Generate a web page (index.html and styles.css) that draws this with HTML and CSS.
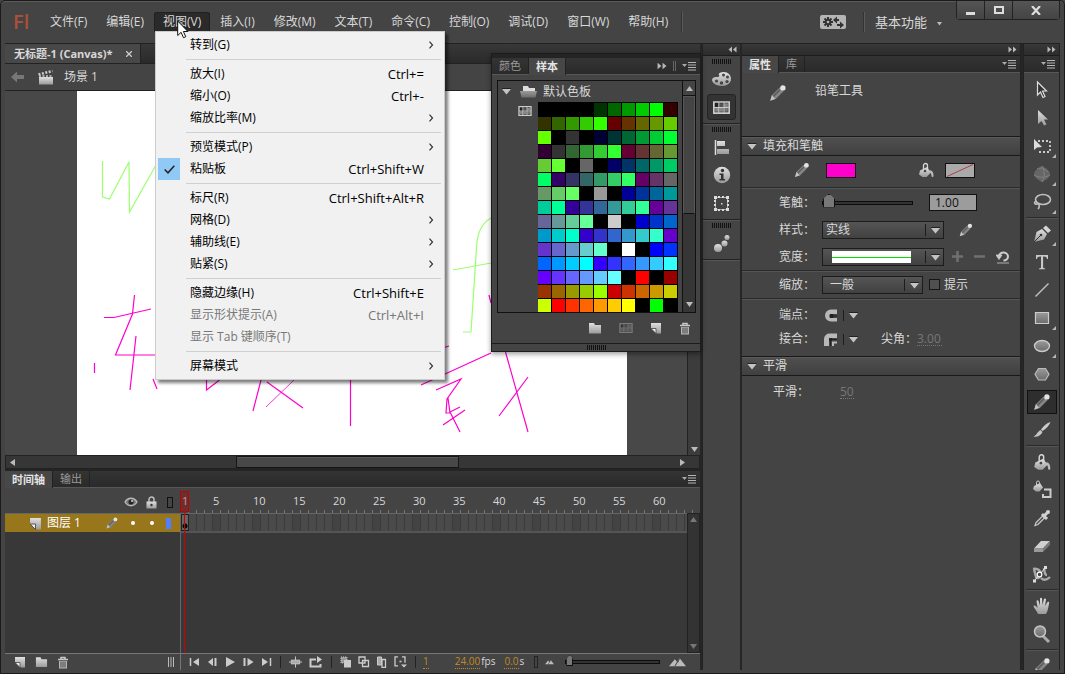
FILE: index.html
```html
<!DOCTYPE html>
<html lang="zh-CN">
<head>
<meta charset="utf-8">
<title>无标题-1 (Canvas)</title>
<link rel="stylesheet" href="styles.css">
</head>
<body>
<svg class="sprite" aria-hidden="true">
  <defs>
    <linearGradient id="metal" x1="0" y1="0" x2="0" y2="1"><stop offset="0" stop-color="#e0e0e0"/><stop offset="1" stop-color="#9a9a9a"/></linearGradient>
    <linearGradient id="dim" x1="0" y1="0" x2="0" y2="1"><stop offset="0" stop-color="#9a9a9a"/><stop offset="1" stop-color="#6c6c6c"/></linearGradient>
  </defs>
  <symbol id="pencil" viewBox="0 0 18 18"><path d="M2 16l1.500-5 7-7 3.500 3.500-7 7z" fill="#858585"/><path d="M2 16l1.500-5 1.200 1 .6 1.200 1.500 1z" fill="#c4c4c4"/><path d="M4.800 12l6-6" stroke="#5e5e5e" stroke-width="1.500"/><circle cx="13.400" cy="4.400" r="2.400" fill="#e4e4e4"/></symbol>
  <symbol id="bucket" viewBox="0 0 18 18"><path d="M3 9.500l7-3.500 4 5.500-4.500 4.500H5.500L2 13.500z" fill="url(#metal)"/><path d="M6.500 10V4.500a2 2 0 0 1 4 0V10" fill="none" stroke="#d6d6d6" stroke-width="1.300"/><path d="M13 9c3 1 3.500 3 3.500 6a1 1 0 0 1-2 0c0-2-.5-3-2-4z" fill="#bbb"/><circle cx="8" cy="10" r="1.300" fill="#444"/></symbol>
  <symbol id="menu-lines" viewBox="0 0 14 9"><path d="M0 2h5L2.500 5z" fill="#aaa"/><path d="M6 .5h8M6 3h8M6 5.500h8M6 8h8" stroke="#b5b5b5"/></symbol>
  <symbol id="dbl" viewBox="0 0 9 7"><path d="M.5 .5l3.500 3-3.500 3zM5 .5l3.500 3-3.500 3z" fill="#b8b8b8"/></symbol>
  <symbol id="dbl-left" viewBox="0 0 9 7"><path d="M4 .5L.5 3.500 4 6.500zM8.500 .5L5 3.500l3.500 3z" fill="#b8b8b8"/></symbol>
  <symbol id="down" viewBox="0 0 9 7"><path d="M0 .5h9" stroke="#222" stroke-width="1"/><path d="M0 1h9L4.500 6.500z" fill="#c4c4c4"/></symbol>
  <symbol id="chev" viewBox="0 0 6 8"><path d="M1.500 .7L4.500 4 1.500 7.300" fill="none" stroke="#333" stroke-width="1.200"/></symbol>
  <symbol id="folder" viewBox="0 0 14 12"><path d="M1 1h5l1 2h6v8.500H1z" fill="url(#metal)"/></symbol>
  <symbol id="newpage" viewBox="0 0 12 12"><path d="M1 1h10v10.500H6.500L1 6z" fill="url(#metal)"/><path d="M1 6.500h5v5z" fill="#eee" stroke="#444" stroke-width=".8"/></symbol>
  <symbol id="trash" viewBox="0 0 12 13"><path d="M1 3.500h10M4 3V1.500h4V3" fill="none" stroke="#c8c8c8" stroke-width="1.500"/><path d="M2 5h8v7.500H2z" fill="#b5b5b5"/><path d="M4 5.500v6M6 5.500v6M8 5.500v6" stroke="#444"/></symbol>
  <symbol id="swgrid" viewBox="0 0 16 12"><path d="M.8 .8h14.400v10.400H.8z" fill="#222" stroke="#ccc" stroke-width="1.600"/><path d="M6 2h3.500v3.500H6z" fill="#555"/><path d="M10.500 2h3.500v3.500h-3.500zM2 6.500h3.500V10H2zM6 6.500h3.500V10H6z" fill="#888"/><path d="M10.500 6.500h3.500V10h-3.500z" fill="#777"/><path d="M5.500 1v10M10.300 1v10M1 6h14" stroke="#ccc"/></symbol>
  <symbol id="palette" viewBox="0 0 22 18"><path d="M13 2c4 0 7 3 7 7s-4 7-9 7S1 13 1 10c0-2 2-3 4-3s4 0 3-2 2-3 5-3z" fill="url(#metal)"/><g fill="#444"><circle cx="12.500" cy="5" r="1.500"/><circle cx="16.500" cy="7" r="1.500"/><circle cx="16" cy="11.500" r="1.600"/><circle cx="10.500" cy="13" r="1.700"/><circle cx="5.500" cy="11" r="1.600"/></g></symbol>
  <symbol id="align" viewBox="0 0 16 16"><path d="M1.500 1v15" stroke="#ddd" stroke-width="1.500"/><path d="M3 2h8v5H3zM3 10h12v5H3z" fill="url(#metal)"/></symbol>
  <symbol id="info" viewBox="0 0 18 18"><circle cx="9" cy="9" r="8.200" fill="url(#metal)"/><circle cx="9.500" cy="4.500" r="1.700" fill="#333"/><path d="M6.500 7.500h4V13H12v1.500H6.500V13H8V9H6.500z" fill="#333"/></symbol>
  <symbol id="xform" viewBox="0 0 17 17"><path d="M2.500 2.500h12v12h-12z" fill="none" stroke="#aaa"/><path d="M1 1h3v3H1zM5 1h2v2H5zM9 1h2v2H9zM13 1h3v3h-3zM1 5h2v2H1zM1 9h2v2H1zM14 5h2v2h-2zM14 9h2v2h-2zM1 13h3v3H1zM5 14h2v2H5zM9 14h2v2H9zM13 13h3v3h-3zM8 8h1.500v1.500H8z" fill="#ddd"/></symbol>
  <symbol id="balls" viewBox="0 0 18 18"><circle cx="5" cy="14" r="4" fill="url(#metal)"/><circle cx="11.500" cy="9.500" r="3" fill="url(#metal)"/><circle cx="14" cy="3.500" r="2.500" fill="url(#metal)"/></symbol>
  <symbol id="corner" viewBox="0 0 4 4"><path d="M4 0v4H0z" fill="#b5b5b5"/></symbol>
  <symbol id="t-select" viewBox="0 0 20 20"><path d="M5.500 2v13l3-3 2.500 5.500 2-1-2.500-5.500h4z" fill="#333" stroke="#ddd" stroke-width="1.200"/></symbol>
  <symbol id="t-sub" viewBox="0 0 20 20"><path d="M6 2v14l3.500-3 2.500 4.500 2.500-1-2.500-5h4z" fill="url(#metal)"/></symbol>
  <symbol id="t-free" viewBox="0 0 20 20"><path d="M6 5h12v11H5" fill="none" stroke="#ccc" stroke-width="1.800" stroke-dasharray="2 2"/><path d="M2 3v11l3-2.500 5-.5z" fill="#ddd"/></symbol>
  <symbol id="t-3d" viewBox="0 0 20 20"><path d="M10 2c4 2 8 5 8 8s-4 6-8 8c-4-2-8-5-8-8s4-6 8-8z" fill="#666"/><path d="M2 11c5 3 11 3 16 0M10 2c3 5 3 11 0 16M5 5c4-2 7-1 11 3" fill="none" stroke="#808080" stroke-width="1"/></symbol>
  <symbol id="t-lasso" viewBox="0 0 20 20"><ellipse cx="11" cy="7.500" rx="7.500" ry="5" fill="none" stroke="#c0c0c0" stroke-width="1.600"/><path d="M4.500 9c-3 1-2 4 .5 3s3 3 1 5" fill="none" stroke="#c0c0c0" stroke-width="1.600"/></symbol>
  <symbol id="t-pen" viewBox="0 0 20 20"><path d="M2 18L4.500 8 10 5l5 5-3 5.500z" fill="url(#metal)"/><path d="M11 4l3-2.500 5 5-3 2.500z" fill="#d5d5d5"/><path d="M2 18l6-6" stroke="#333"/><circle cx="9" cy="11" r="1.300" fill="#333"/></symbol>
  <symbol id="t-text" viewBox="0 0 20 20"><path d="M4 3h12v4h-1c-.3-2-1-2.600-3.500-2.600h-.4V15c0 1 .5 1.300 2 1.400v.8H7v-.8c1.500-.1 2-.4 2-1.400V4.400h-.5C6 4.400 5.300 5 5 7H4z" fill="#c8c8c8"/></symbol>
  <symbol id="t-line" viewBox="0 0 20 20"><path d="M3.500 16.500l13-13" stroke="#c0c0c0" stroke-width="1.500"/></symbol>
  <symbol id="t-rect" viewBox="0 0 20 20"><path d="M3.500 4.500h13v11h-13z" fill="url(#dim)" stroke="#ccc" stroke-width="1.200"/></symbol>
  <symbol id="t-oval" viewBox="0 0 20 20"><ellipse cx="10" cy="10" rx="7.500" ry="5.500" fill="url(#dim)" stroke="#ccc" stroke-width="1.300"/></symbol>
  <symbol id="t-poly" viewBox="0 0 20 20"><path d="M6.500 4.500h7l3.500 5.700-3.500 5.800h-7L3 10.200z" fill="url(#dim)" stroke="#bbb" stroke-width="1.200"/></symbol>
  <symbol id="t-brush" viewBox="0 0 20 20"><path d="M18.500 2c-1 3-4 6.500-8 9L9 9.500C11.500 6 15 3 18.500 2z" fill="#ccc"/><path d="M8.500 10l2 2C9 15.500 5 17.500 1.500 16.500 5 15 5 12 8.500 10z" fill="#c4c4c4"/></symbol>
  <symbol id="t-ink" viewBox="0 0 20 20"><path d="M2 6l6-3 3 4.500-3.500 4H4L1 9z" fill="url(#metal)"/><path d="M4.500 7V2.500a1.500 1.500 0 0 1 3 0V7" fill="none" stroke="#ccc"/><path d="M12 9.500h6.500v7.500H11V14" fill="none" stroke="#ccc" stroke-width="2"/></symbol>
  <symbol id="t-drop" viewBox="0 0 20 20"><path d="M3 17.500l1-3 6.500-6.500 2 2L6 16.500z" fill="#555" stroke="#c8c8c8" stroke-width="1.200"/><path d="M10 6l5 5M12 8l4-4" stroke="#d2d2d2" stroke-width="3"/><circle cx="16" cy="4" r="2" fill="#d2d2d2"/></symbol>
  <symbol id="t-eraser" viewBox="0 0 20 20"><path d="M9 5h9l-7 7.500H2z" fill="#d0d0d0"/><path d="M2 12.500h9V16H2z" fill="#999"/><path d="M11 12.500L18 5v4l-7 7z" fill="#777"/></symbol>
  <symbol id="t-width" viewBox="0 0 20 20"><path d="M1 5c5-1 7 1 8 5M2 6c2 4 1 7 3 8s3-2 4-3M12 4c1 4 0 7 3 7M9 14c3 3 6 2 9-1" fill="none" stroke="#a8a8a8" stroke-width="2.400"/><path d="M2 17L14 3" stroke="#eee"/><circle cx="7.500" cy="10.500" r="2.300" fill="#444" stroke="#fff" stroke-width="1.200"/><path d="M1 15.500h3v3H1zM12 2h3v3h-3z" fill="#ddd"/></symbol>
  <symbol id="t-hand" viewBox="0 0 20 20"><path d="M6 18C5 15 2 12 1.500 10c1-1 2.500 0 4 2L4.500 5c.5-1 1.700-1 2 0L8 9.500 8 2.500c.5-1 1.800-1 2 0l.5 6.500L12 3c.5-1 2-.6 2 .5L13 10l2.500-4c.8-.8 2-.2 1.700 1C16.500 10 16 15 14 18z" fill="url(#metal)"/></symbol>
  <symbol id="t-zoom" viewBox="0 0 20 20"><path d="M11 12l6 6" stroke="#aaa" stroke-width="3"/><circle cx="8" cy="7.500" r="5.500" fill="url(#dim)" stroke="#c5c5c5" stroke-width="1.500"/></symbol>
  <symbol id="eye" viewBox="0 0 14 10"><path d="M1 5c3-5 9-5 12 0-3 5-9 5-12 0z" fill="#777" stroke="#b8b8b8" stroke-width="1.400"/><circle cx="7" cy="5" r="2.500" fill="#222"/><circle cx="8" cy="4" r="1" fill="#ddd"/></symbol>
  <symbol id="lock" viewBox="0 0 11 13"><path d="M3 6V3.500a2.500 2.500 0 0 1 5 0V6" fill="none" stroke="#bbb" stroke-width="1.500"/><path d="M.5 5.500h10v7H.5z" fill="url(#metal)"/><circle cx="5.500" cy="9" r="1.200" fill="#333"/></symbol>
  <symbol id="prev" viewBox="0 0 11 10"><path d="M6 1v8L1 5z" fill="#ccc"/><path d="M8.500 1v8" stroke="#ccc" stroke-width="2"/></symbol>
  <symbol id="play" viewBox="0 0 11 10"><path d="M1 0v10l9-5z" fill="#ccc"/></symbol>
  <symbol id="centre" viewBox="0 0 14 12"><path d="M7 0v12M0 6h2M12 6h2" stroke="#ccc"/><path d="M2.500 4h9v4h-9z" fill="#aaa" stroke="#ccc"/></symbol>
  <symbol id="loop" viewBox="0 0 14 12"><path d="M7 3.500H1.500v7h10V8" fill="none" stroke="#ccc" stroke-width="2"/><path d="M8 0l5 3.500L8 7z" fill="#ccc"/></symbol>
  <symbol id="onion" viewBox="0 0 12 12"><path d="M1 1h6v6H1z" fill="#999" stroke="#ccc" stroke-dasharray="1 1"/><path d="M4 4h7v7.500H4z" fill="#ccc"/></symbol>
  <symbol id="outlines" viewBox="0 0 12 12"><path d="M1 1h6v6H1zM4.500 4.500h6v6h-6z" fill="#444" stroke="#ccc" stroke-width="1.300"/></symbol>
  <symbol id="multi" viewBox="0 0 12 12"><path d="M1.500 1h4v8h-4z" fill="#aaa" stroke="#ccc"/><path d="M6 3.500h3.500v8H6z" fill="#444" stroke="#ccc" stroke-width="1.300"/></symbol>
  <symbol id="brackets" viewBox="0 0 13 12"><path d="M4 .8H1v9h3M8 .8h3v6M5.500 5.500h2" fill="none" stroke="#ccc" stroke-width="1.300"/><path d="M7 8.500h6l-3 3z" fill="#ccc"/></symbol>
  <symbol id="hills" viewBox="0 0 16 9"><path d="M0 8.500L5.500 2l3 3.500L10 1l6 7.500z" fill="#bbb"/><path d="M5.500 8.500L10 1" stroke="#555"/></symbol>
</svg>

<div class="app">
  <header class="titlebar">
    <div class="logo">Fl</div>
    <nav class="menubar">
      <button>文件(F)</button><button>编辑(E)</button><button class="open">视图(V)</button><button>插入(I)</button><button>修改(M)</button><button>文本(T)</button><button>命令(C)</button><button>控制(O)</button><button>调试(D)</button><button>窗口(W)</button><button>帮助(H)</button>
    </nav>
    <span class="vline"></span>
    <span class="spacer"></span>
    <button class="sync" aria-label="同步设置"><svg width="26" height="14" viewBox="0 0 26 14"><g stroke="#333" stroke-width="2"><path d="M8 2v10M3 7h10M4.500 3.500l7 7M4.500 10.500l7-7"/></g><circle cx="8" cy="7" r="3.200" fill="#333"/><circle cx="8" cy="7" r="1.300" fill="#b5b5b5"/><path d="M13 5l4-3.500V4h2v2h-2v2.500zM24 10l-4 3.500V11h-3V9h3V6.500z" fill="#333"/></svg></button>
    <span class="vline"></span>
    <button class="workspace">基本功能<svg width="5" height="4"><path d="M0 0h5L2.500 3.500z" fill="#bbb"/></svg></button>
    <div class="winbtns">
      <button aria-label="最小化"><svg width="10" height="12"><path d="M0 8h9v3H0z" fill="#ddd"/></svg></button>
      <button aria-label="最大化"><svg width="10" height="9"><path d="M1 1h8v6H1z" fill="none" stroke="#ddd" stroke-width="2"/></svg></button>
      <button class="close" aria-label="关闭"><svg width="10" height="9"><path d="M1 0l8 9M9 0L1 9" stroke="#ddd" stroke-width="2.200"/></svg></button>
    </div>
  </header>

  <div class="workspace-row">
    <main class="left">
      <div class="doctabs"><div class="doctab">无标题-1 (Canvas)*<button aria-label="关闭文档"><svg width="6" height="6"><path d="M0 0l6 6M6 0L0 6" stroke="#ccc" stroke-width="1.300"/></svg></button></div></div>
      <div class="scenebar">
        <svg width="13" height="12" viewBox="0 0 13 12"><path d="M0 6l6-5.500V4h7v4H6v3.500z" fill="#777"/></svg>
        <svg width="16" height="15" viewBox="0 0 16 15"><path d="M1 7h14v7.500H1z" fill="url(#metal)"/><path d="M.5 4.500L14.500 1" stroke="#ccc" stroke-width="2.500" stroke-dasharray="2 1.500"/><path d="M1 6h14" stroke="#ccc" stroke-width="1.500" stroke-dasharray="2 1.500"/></svg>
        <span>场景 1</span>
      </div>
      <div class="stagewrap">
        <div class="stage">
          <svg class="art" width="550" height="365" viewBox="77 90 550 365" preserveAspectRatio="xMinYMin slice">
            <g fill="none" stroke="#9cff6e" stroke-width="1.200">
              <path d="M102.500 160v36l7 2L129 161l.5 50 26-46M491 217c-9 5-14 15-14.500 30l-5.500 84h-8M453 269l38-7"/>
            </g>
            <g fill="none" stroke="#ff00cc" stroke-width="1.200">
              <path d="M134.500 294l-2 19-17 41H155M104 316.500h10l37-8.500M136 335l-6 54M94.500 362v10M153 378l4 10M206.500 378v11l13-10M261 379l-8 31M267 381l36 26M350.500 378v47M421 384l70-32M440 348l9-3M436 389l25-11-14 20-1 14h4l-2-15M450 411l10 20M450 411l10-5M443 424l22-15M505.500 351L528 431M499 415l29-39M489 294l2 8"/>
              <path d="M294 379l-28 27" stroke-width=".8"/>
            </g>
          </svg>
        </div>
        <div class="vscroll"><svg width="7" height="6"><path d="M0 0h7L3.500 5z" fill="#bbb"/></svg></div>
      </div>
      <div class="hscroll">
        <svg width="5" height="7"><path d="M5 0v7L0 3.500z" fill="#bbb"/></svg>
        <div class="htrack"><div class="hthumb"></div></div>
        <svg width="5" height="7"><path d="M0 0v7l5-3.500z" fill="#bbb"/></svg>
      </div>

      <section class="timeline">
        <div class="tabs"><button class="tab on">时间轴</button><button class="tab">输出</button><span class="spacer"></span><svg class="pm" width="14" height="9"><use href="#menu-lines"/></svg></div>
        <div class="tl-grid">
          <div class="layerhead">
            <svg width="14" height="10"><use href="#eye"/></svg>
            <svg width="11" height="13"><use href="#lock"/></svg>
            <span class="outlinebox"></span>
          </div>
          <div class="ruler" id="ruler"></div>
          <div class="layers">
            <div class="layer">
              <svg width="13" height="13"><use href="#newpage"/></svg>
              <span class="lname">图层 1</span>
              <svg width="14" height="14"><use href="#pencil"/></svg>
              <i class="dot"></i><i class="dot"></i><i class="lcolor"></i>
            </div>
          </div>
          <div class="frames">
            <div class="framecol"><div class="framerow"><i class="key"></i></div></div>
            <div class="tscroll"><svg width="7" height="5"><path d="M0 5h7L3.500 0z" fill="#777"/></svg><svg width="7" height="5"><path d="M0 0h7L3.500 5z" fill="#777"/></svg></div>
          </div>
          <div class="playhead"></div>
        </div>
        <div class="tl-foot">
          <div class="foot-left">
            <button aria-label="新建图层"><svg width="12" height="12"><use href="#newpage"/></svg></button>
            <button aria-label="新建文件夹"><svg width="13" height="12"><use href="#folder"/></svg></button>
            <button aria-label="删除"><svg width="12" height="13"><use href="#trash"/></svg></button>
            <span class="spacer"></span>
            <svg width="6" height="10"><path d="M.5 0v10M3 0v10M5.500 0v10" stroke="#bbb"/></svg>
          </div>
          <div class="foot-right">
            <div class="grp play">
              <button aria-label="第一帧"><svg width="11" height="10"><path d="M1.500 1v8" stroke="#ccc" stroke-width="1.500"/><path d="M10 1v8L4 5z" fill="#ccc"/></svg></button>
              <button aria-label="后退一帧"><svg width="11" height="10"><use href="#prev"/></svg></button>
              <button aria-label="播放"><svg width="11" height="10"><use href="#play"/></svg></button>
              <button aria-label="前进一帧"><svg width="11" height="10"><path d="M1.500 1v8" stroke="#ccc" stroke-width="2"/><path d="M4.500 1v8L10.500 5z" fill="#ccc"/></svg></button>
              <button aria-label="最后一帧"><svg width="11" height="10"><path d="M1 1v8l6-4z" fill="#ccc"/><path d="M9.500 1v8" stroke="#ccc" stroke-width="1.500"/></svg></button>
            </div>
            <div class="grp two">
              <button aria-label="帧居中"><svg width="13" height="12"><use href="#centre"/></svg></button>
              <button aria-label="循环"><svg width="14" height="12"><use href="#loop"/></svg></button>
            </div>
            <div class="grp four">
              <button aria-label="绘图纸外观"><svg width="12" height="12"><use href="#onion"/></svg></button>
              <button aria-label="绘图纸外观轮廓"><svg width="12" height="12"><use href="#outlines"/></svg></button>
              <button aria-label="编辑多个帧"><svg width="12" height="12"><use href="#multi"/></svg></button>
              <button aria-label="修改标记"><svg width="13" height="12"><use href="#brackets"/></svg></button>
            </div>
            <div class="stats"><b class="st1">1</b><b>24.00</b><span>fps</span><b class="st3">0.0</b><span>s</span></div>
            <span class="nub"></span>
            <svg width="9" height="6"><use href="#hills"/></svg>
            <input class="range tlzoom" type="range" min="0" max="100" value="0" aria-label="时间轴缩放">
            <svg width="17" height="10"><use href="#hills"/></svg>
          </div>
        </div>
      </section>
    </main>

    <aside class="dock">
      <div class="strip"><svg width="9" height="7"><use href="#dbl-left"/></svg></div>
      <div class="dgroup"><i class="grip"></i><button aria-label="颜色"><svg width="22" height="18"><use href="#palette"/></svg></button><button class="sel" aria-label="样本"><svg width="17" height="13"><use href="#swgrid"/></svg></button></div>
      <div class="dgroup"><i class="grip"></i><button aria-label="对齐"><svg width="16" height="16"><use href="#align"/></svg></button><button aria-label="信息"><svg width="18" height="18"><use href="#info"/></svg></button><button aria-label="变形"><svg width="17" height="17"><use href="#xform"/></svg></button></div>
      <div class="dgroup"><i class="grip"></i><button aria-label="动画预设"><svg width="18" height="18"><use href="#balls"/></svg></button></div>
    </aside>

    <aside class="props">
      <div class="strip"><svg width="9" height="7"><use href="#dbl"/></svg></div>
      <div class="tabs"><button class="tab on">属性</button><button class="tab">库</button><span class="spacer"></span><svg class="pm" width="14" height="9"><use href="#menu-lines"/></svg></div>
      <div class="toolhead"><svg width="20" height="20"><use href="#pencil"/></svg><span>铅笔工具</span></div>
      <h2><svg width="10" height="7"><use href="#down"/></svg>填充和笔触</h2>
      <div class="group colors">
        <svg width="18" height="18"><use href="#pencil"/></svg>
        <button class="chip pink" aria-label="笔触颜色"></button>
        <svg class="bk" width="18" height="18"><use href="#bucket"/></svg>
        <button class="chip none" aria-label="填充颜色"><svg width="28" height="13"><path d="M1 12.500L27 .5" stroke="#b04040"/></svg></button>
      </div>
      <div class="group stroke">
        <div class="row"><label for="sw">笔触：</label><input class="range" type="range" min="0" max="100" value="0" aria-label="笔触大小"><input class="num" id="sw" type="text" value="1.00"></div>
        <div class="row"><label for="style">样式：</label><span class="dd"><select id="style"><option>实线</option></select><svg width="9" height="7"><use href="#down"/></svg></span><svg class="edit" width="16" height="16"><use href="#pencil"/></svg></div>
        <div class="row"><label for="wid">宽度：</label><span class="dd"><select id="wid"><option></option></select><i class="preview"></i><svg width="9" height="7"><use href="#down"/></svg></span>
          <span class="ops"><svg width="11" height="11"><path d="M5.500 0v11M0 5.500h11" stroke="#707070" stroke-width="2.500"/></svg><svg width="11" height="11"><path d="M0 5.500h11" stroke="#707070" stroke-width="2.500"/></svg><svg width="14" height="14"><path d="M3 6a4.500 4 0 1 1 4.500 4.500" fill="none" stroke="#ccc" stroke-width="2"/><path d="M0 5h6L3 9.500zM1 13h12" fill="#ccc" stroke="#ccc" stroke-width=".8"/></svg></span></div>
      </div>
      <div class="group scale">
        <div class="row"><label for="sc">缩放：</label><span class="dd short"><select id="sc"><option>一般</option></select><svg width="9" height="7"><use href="#down"/></svg></span><label class="hint"><input type="checkbox">提示</label></div>
      </div>
      <div class="group caps">
        <div class="row"><span class="lab">端点：</span><button class="cap" aria-label="端点"><svg width="14" height="13"><path d="M13 .5H7a6 6 0 0 0 0 12h6V9H7V5h6z" fill="#b8b8b8"/><path d="M6 5.500h3v3H6zM8 7h5" fill="#222" stroke="#222"/></svg><i></i><svg width="9" height="7"><use href="#down"/></svg></button></div>
        <div class="row"><span class="lab">接合：</span><button class="cap" aria-label="接合"><svg width="14" height="13"><path d="M0 13V6A5.500 5.500 0 0 1 6 .5h7V5H5v8z" fill="#b8b8b8"/><path d="M5 5h3v3H5z" fill="#222"/><path d="M6.500 7v6M7 6.500h6" stroke="#222"/><path d="M8 8.500h5v2h-3V13H8z" fill="#b8b8b8"/></svg><i></i><svg width="9" height="7"><use href="#down"/></svg></button><label class="miter" for="mt">尖角：</label><input class="hot" id="mt" type="text" value="3.00" disabled></div>
      </div>
      <h2><svg width="10" height="7"><use href="#down"/></svg>平滑</h2>
      <div class="smooth"><label for="sm">平滑：</label><input class="hot s" id="sm" type="text" value="50" disabled></div>
    </aside>

    <aside class="tools">
      <div class="strip"><svg width="9" height="7"><use href="#dbl"/></svg></div>
      <div class="tabs"><span class="spacer"></span><svg class="pm" width="14" height="9"><use href="#menu-lines"/></svg></div>
      <div class="toollist" id="tools"></div>
    </aside>
  </div>

  <section class="floating">
    <div class="tabs"><button class="tab">颜色</button><button class="tab on">样本</button><span class="spacer"></span><svg width="10" height="8"><use href="#dbl"/></svg><i class="bars"></i><svg class="pm" width="14" height="9"><use href="#menu-lines"/></svg></div>
    <div class="well">
      <div class="wellbody">
        <div class="welltitle"><svg width="9" height="7"><use href="#down"/></svg><svg width="17" height="13" viewBox="0 0 17 13"><path d="M3 1h5l1 2h6v3H3z" fill="#ddd"/><path d="M0 6h17l-1.500 6.500h-14z" fill="url(#dim)"/></svg>默认色板</div>
        <div class="wellgrid"><svg width="14" height="10"><use href="#swgrid"/></svg><div class="swatches" id="swatches"></div></div>
      </div>
      <div class="wscroll"><span class="sbtn"><svg width="7" height="5"><path d="M0 5h7L3.500 0z" fill="#bbb"/></svg></span><span class="sthumb"></span><span class="sbtn end"><svg width="7" height="5"><path d="M0 0h7L3.500 5z" fill="#bbb"/></svg></span></div>
    </div>
    <div class="wfoot">
      <button aria-label="新建文件夹"><svg width="14" height="12"><use href="#folder"/></svg></button>
      <button class="off" aria-label="新建调色板"><svg width="14" height="10"><use href="#swgrid"/></svg></button>
      <button aria-label="新建样本"><svg width="12" height="12"><use href="#newpage"/></svg></button>
      <button aria-label="删除样本"><svg width="12" height="13"><use href="#trash"/></svg></button>
    </div>
    <div class="wgrip"><i class="grip"></i></div>
  </section>

  <div class="menu" role="menu">
    <button class="sub">转到(G)<svg width="6" height="8"><use href="#chev"/></svg></button><hr>
    <button>放大(I)<kbd>Ctrl+=</kbd></button>
    <button>缩小(O)<kbd>Ctrl+-</kbd></button>
    <button class="sub">缩放比率(M)<svg width="6" height="8"><use href="#chev"/></svg></button><hr>
    <button class="sub">预览模式(P)<svg width="6" height="8"><use href="#chev"/></svg></button>
    <button class="checked"><span class="check"><svg width="11" height="9"><path d="M.7 4.500L4 7.800 10.300 .8" fill="none" stroke="#222" stroke-width="1.500"/></svg></span>粘贴板<kbd>Ctrl+Shift+W</kbd></button><hr>
    <button>标尺(R)<kbd>Ctrl+Shift+Alt+R</kbd></button>
    <button class="sub">网格(D)<svg width="6" height="8"><use href="#chev"/></svg></button>
    <button class="sub">辅助线(E)<svg width="6" height="8"><use href="#chev"/></svg></button>
    <button class="sub">贴紧(S)<svg width="6" height="8"><use href="#chev"/></svg></button><hr>
    <button>隐藏边缘(H)<kbd>Ctrl+Shift+E</kbd></button>
    <button disabled>显示形状提示(A)<kbd>Ctrl+Alt+I</kbd></button>
    <button disabled>显示 Tab 键顺序(T)</button><hr>
    <button class="sub">屏幕模式<svg width="6" height="8"><use href="#chev"/></svg></button>
  </div>
  <svg class="cursor" width="12" height="19"><path d="M.7 1v14.500l3.400-3.200 2.400 5.400 2.300-1-2.400-5.200h4.500z" fill="#fff" stroke="#111"/></svg>
</div>
<script src="script.js"></script>
</body>
</html>
```
FILE: styles.css
```css
* { box-sizing: border-box; }
body { margin: 0; background: #444; color: #d8d8d8; font: 12px/16px "Open Sans", "Noto Sans CJK SC", sans-serif; }
button, input, select { font: inherit; color: inherit; margin: 0; padding: 0; border: 0; background: none; }
svg { display: block; flex: none; }
.sprite { position: absolute; width: 0; height: 0; }
.spacer { flex: 1; }
.app { position: relative; display: flex; flex-direction: column; height: 100vh; overflow: hidden; padding: 0 4px 3px; background: #444; border: 1px solid #1b1b1b; border-radius: 5px 5px 0 0; box-shadow: inset 0 1px #5a5a5a; }

.titlebar { display: flex; align-items: center; height: 42px; flex: none; padding-left: 8px; }
.logo { width: 28px; color: #a9503c; font: 600 20px/24px "Open Sans", sans-serif; }
.menubar { display: flex; gap: 1px; }
.menubar button { height: 20px; padding: 0 9px; white-space: nowrap; }
.menubar .open { background: #2a2a2a; border-radius: 3px 3px 0 0; box-shadow: inset 0 0 0 1px #202020; }
.vline { width: 2px; height: 20px; background: #333; border-right: 1px solid #5a5a5a; margin-left: 4px; }
.sync { width: 26px; height: 14px; border-radius: 2px; background: #b5b5b5; margin-right: 13px; }
.workspace { display: flex; align-items: center; gap: 10px; font-size: 13px; padding-left: 10px; }
.workspace svg { margin-top: 4px; }
.winbtns { display: flex; align-self: flex-start; margin-left: 14px; border: 1px solid #222; border-top: 0; border-radius: 0 0 4px 4px; }
.winbtns button { width: 28px; height: 18px; display: grid; place-items: center; border-right: 1px solid #222; background: linear-gradient(#555, #444); }
.winbtns .close { width: 46px; border: 0; }

.workspace-row { flex: 1; min-height: 0; display: flex; gap: 2px; background: #262626; border-top: 1px solid #222; }
.left { flex: 1; min-width: 0; display: flex; flex-direction: column; background: #444; }
.doctabs { height: 20px; flex: none; display: flex; background: linear-gradient(#383838, #2a2a2a); border-bottom: 1px solid #222; }
.doctab { display: flex; align-items: center; gap: 14px; padding: 0 8px 0 9px; background: #484848; border-right: 1px solid #222; font-size: 11px; font-weight: bold; white-space: nowrap; }
.scenebar { height: 27px; flex: none; display: flex; align-items: center; gap: 14px; padding-left: 6px; border-bottom: 1px solid #222; }
.scenebar span { margin-left: -4px; }
.stagewrap { flex: 1; min-height: 0; display: flex; }
.stage { flex: 1; min-width: 0; overflow: hidden; padding-left: 72px; background: #484848; }
.art { background: #fff; height: 100%; }
.vscroll { width: 13px; border-left: 1px solid #222; background: #3c3c3c; display: flex; flex-direction: column; justify-content: flex-end; align-items: center; padding-bottom: 2px; }
.hscroll { height: 14px; flex: none; display: flex; align-items: center; gap: 4px; padding: 0 14px 0 4px; border: 1px solid #222; background: #363636; }
.htrack { flex: 1; align-self: stretch; }
.hthumb { width: 34%; height: 12px; margin-left: 33%; background: #484848; border: 1px solid #161616; box-shadow: inset 0 1px #5a5a5a; }

.tabs { display: flex; align-items: stretch; height: 17px; flex: none; background: linear-gradient(#343434, #2a2a2a); border-bottom: 1px solid #575757; font-size: 11px; }
.tab { padding: 0 7px; color: #999; border-right: 1px solid #222; font-size: 11px; line-height: 14px; }
.tab.on { background: #474747; color: #e4e4e4; font-weight: bold; margin-bottom: -1px; }
.tabs svg { align-self: center; }
.pm { margin-right: 4px; }

.timeline { flex: none; border-top: 2px solid #242424; }
.tl-grid { position: relative; display: grid; grid-template-columns: 176px 1fr; grid-template-rows: 25px 140px; }
.layerhead { display: flex; align-items: center; justify-content: flex-end; gap: 8px; padding: 3px 8px 0 0; }
.outlinebox { width: 6px; height: 11px; border: 1px solid #111; margin-left: 2px; }
.ruler { display: flex; overflow: hidden; font-size: 11px; padding-top: 5px; background: repeating-linear-gradient(90deg, transparent 0 7px, #777 7px 8px) 0 22px / 100% 3px no-repeat; }
.ruler span { width: 40px; flex: none; text-align: left; white-space: nowrap; }
.ruler span:first-child { width: 32px; padding-left: 1px; }
.layers { background: #383838; border-right: 1px solid #666; border-top: 1px solid #666; }
.layer { display: flex; align-items: center; height: 18px; padding: 0 9px 0 24px; background: #98761c; color: #fff; }
.lname { margin-left: 5px; flex: 1; white-space: nowrap; }
.dot { width: 4px; height: 4px; border-radius: 50%; background: #fff; margin-left: 15px; }
.layer svg + .dot { margin-left: 12px; }
.lcolor { width: 5px; height: 11px; margin-left: 12px; background: #4f80ff; }
.frames { display: flex; min-width: 0; }
.framecol { flex: 1; background: #383838; border-top: 1px solid #666; }
.framerow { height: 19px; background: repeating-linear-gradient(90deg, transparent 0 7px, #3b3b3b 7px 8px), repeating-linear-gradient(90deg, #4a4a4a 0 32px, #434343 32px 40px); border-bottom: 2px solid #555; }
.key { display: block; width: 8px; height: 17px; border: 1px solid #222; background: radial-gradient(circle at 3px 11px, #000 0 2px, #666 3px); }
.tscroll { width: 13px; background: #333; border: 1px solid #222; display: flex; flex-direction: column; justify-content: space-between; align-items: center; padding: 3px 0; }
.playhead { position: absolute; left: 175px; top: 3px; width: 9px; height: 21px; border: 1px solid #c00000; background: rgba(200, 0, 0, .3); }
.playhead::after { content: ""; position: absolute; left: 3px; top: 19px; width: 1px; height: 142px; background: #d00000; }
.tl-foot { display: grid; grid-template-columns: 176px 1fr; height: 17px; border-top: 1px solid #777; }
.foot-left { display: flex; align-items: center; gap: 9px; padding: 0 6px 0 9px; border-right: 1px solid #777; }
.foot-right { display: flex; align-items: center; padding-left: 8px; min-width: 0; }
.grp { display: flex; align-items: center; border-right: 1px solid #222; height: 12px; }
.play { gap: 7px; padding-right: 8px; }
.two { gap: 7px; padding: 0 8px; }
.four { gap: 6px; padding: 0 8px; }
.stats { display: flex; align-items: baseline; font-size: 10px; line-height: 13px; }
.stats b { color: #c08a20; font-weight: normal; border-bottom: 1px dotted #c08a20; }
.stats .st1 { margin: 0 26px 0 7px; }
.stats .st3 { margin-left: 9px; }
.stats span { margin-left: 1px; }
.nub { width: 4px; height: 12px; border: 1px solid #222; margin: 0 7px 0 10px; }
.foot-right > svg:last-child { margin-right: 14px; }

.strip { height: 12px; flex: none; display: flex; justify-content: flex-end; align-items: center; padding-right: 3px; background: linear-gradient(#383838, #2c2c2c); border-bottom: 1px solid #1c1c1c; }
.dock { width: 38px; flex: none; background: #444; border-left: 1px solid #222; }
.dgroup { display: flex; flex-direction: column; align-items: center; padding: 3px 0 1px; border-bottom: 1px solid #222; box-shadow: 0 1px #555; }
.dgroup button { width: 29px; height: 26px; margin-bottom: 2px; display: grid; place-items: center; border-radius: 3px; }
.dgroup .sel { background: #333; border: 1px solid #242424; }
.grip { width: 19px; height: 5px; margin-bottom: 2px; background: repeating-linear-gradient(90deg, #111 0 1px, #444 1px 2px); }
.props { width: 279px; flex: none; background: #444; border-right: 1px solid #222; }
.toolhead { display: flex; align-items: flex-start; gap: 27px; padding: 10px 0 0 26px; height: 63px; }
.props h2 { display: flex; align-items: center; gap: 6px; margin: 0; height: 20px; padding-left: 5px; font-size: 12px; font-weight: normal; background: linear-gradient(#505050, #404040); border: solid #191919; border-width: 1px 0; box-shadow: inset 0 1px #5a5a5a; }
.group { border-bottom: 1px solid #2a2a2a; box-shadow: 0 1px #555; }
.colors { display: flex; align-items: center; height: 32px; padding: 0 0 3px 51px; }
.chip { width: 30px; height: 15px; border: 1px solid #111; }
.pink { background: #ff00cc; margin-left: 15px; }
.bk { margin-left: 61px; }
.none { background: #aaa; margin-left: 10px; }
.row { display: flex; align-items: center; height: 27px; padding-left: 37px; }
.row > label:first-child, .lab { width: 43px; flex: none; }
.stroke { padding-top: 1px; }
.range { appearance: none; width: 91px; height: 16px; }
.range::-webkit-slider-runnable-track { height: 4px; background: #333; border: 1px solid #0c0c0c; }
.range::-webkit-slider-thumb { appearance: none; width: 12px; height: 14px; margin-top: -8px; background: #777; border: 1px solid #111; clip-path: polygon(50% 0, 100% 40%, 100% 100%, 0 100%, 0 40%); }
.tlzoom { margin: 0 9px 0 11px; flex: 1; width: 60px; min-width: 0; }
.tlzoom::-webkit-slider-thumb { width: 7px; height: 11px; margin-top: -6px; }
.num { width: 48px; height: 17px; margin-left: 16px; padding-left: 5px; background: #9c9c9c; border: 1px solid #111; color: #111; }
.dd { position: relative; width: 122px; height: 18px; }
.dd.short { width: 101px; }
.dd select { appearance: none; display: block; width: 100%; height: 18px; padding-left: 3px; border: 1px solid #1c1c1c; background: linear-gradient(#555, #414141); line-height: 16px; }
.dd.short select { padding-left: 7px; }
.dd::after { content: ""; position: absolute; right: 18px; top: 3px; height: 12px; border-left: 1px solid #1c1c1c; }
.dd svg { position: absolute; right: 4px; top: 6px; pointer-events: none; }
.preview { position: absolute; left: 10px; top: 3px; width: 79px; height: 12px; background: linear-gradient(#fff 0 6px, #00e000 6px 7px, #fff 7px); pointer-events: none; }
.edit { margin-left: 14px; }
.ops { display: flex; align-items: center; gap: 11px; margin-left: 8px; }
.hint { display: flex; align-items: center; gap: 4px; margin-left: 6px; }
.hint input { appearance: none; width: 11px; height: 11px; border: 1px solid #161616; background: #505050; }
.caps { padding: 4px 0 5px; border: 0; box-shadow: none; }
.caps .row { height: 24px; }
.cap { display: flex; align-items: center; gap: 5px; margin-left: 2px; }
.cap i { height: 11px; border-left: 1px solid #1c1c1c; }
.miter { margin-left: 23px; width: 36px; flex: none; white-space: nowrap; }
.hot { width: 25px; height: 14px; color: #777; border-bottom: 1px dotted #777; }
.hot.s { width: 14px; }
.smooth { display: flex; align-items: center; padding: 8px 0 0 31px; }
.smooth label { width: 67px; }
.tools { width: 37px; flex: none; display: flex; flex-direction: column; background: #444; border: 1px solid #222; border-width: 0 1px; }
.toollist { display: flex; flex-direction: column; align-items: center; padding-top: 3px; flex: 1; min-height: 0; overflow: hidden; }
.toollist button { position: relative; width: 30px; height: 24px; margin: 2px 0; flex: none; display: grid; place-items: center; }
.toollist .sel { background: #2e2e2e; border: 1px solid #111; }
.toollist .flag { position: absolute; right: 1px; bottom: 0; }
.toollist hr { width: 32px; height: 2px; margin: 1px 0; flex: none; border: 0; background: #2a2a2a; border-bottom: 1px solid #555; }

.floating { position: absolute; right: 363px; top: 52px; width: 210px; padding-top: 4px; background: #444; border: 1px solid #1c1c1c; box-shadow: inset 0 4px #242424, 0 2px 5px rgba(0, 0, 0, .4); }
.bars { align-self: center; width: 3px; height: 10px; margin: 0 6px; border: solid #666; border-width: 0 1px; }
.well { display: flex; margin: 5px 4px 0 5px; height: 233px; border: 1px solid #111; overflow: hidden; }
.wellbody { flex: 1; }
.welltitle { display: flex; align-items: center; gap: 6px; height: 21px; padding-left: 4px; }
.welltitle svg:first-child { margin-right: 3px; }
.wellgrid { display: flex; gap: 6px; padding-left: 20px; }
.wellgrid > svg { margin-top: 4px; }
.swatches { display: grid; grid-template-columns: repeat(10, 13px); grid-auto-rows: 13px; gap: 1px; background: #000; padding: 1px 1px 1px 0; }
.wscroll { width: 13px; display: flex; flex-direction: column; background: #363636; border-left: 1px solid #111; }
.sbtn { height: 15px; display: grid; place-items: center; background: #444; border-bottom: 1px solid #111; }
.sbtn.end { margin-top: auto; background: none; border: 0; }
.sthumb { height: 118px; background: #444; border: 1px solid #575757; border-bottom-color: #111; }
.wfoot { display: flex; align-items: center; justify-content: flex-end; gap: 17px; height: 30px; padding-right: 9px; }
.off { opacity: .4; }
.wgrip { display: flex; justify-content: center; height: 8px; border-top: 1px solid #1c1c1c; padding-top: 1px; }

.menu { position: absolute; left: 154px; top: 30px; width: 290px; padding: 2px; background: #f1f1f1; border: 1px solid #ccc; color: #000; box-shadow: 3px 3px 3px rgba(0, 0, 0, .5); }
.menu button { position: relative; display: flex; width: 100%; height: 22px; align-items: center; justify-content: space-between; padding: 0 18px 0 32px; }
.menu .sub { padding-right: 8px; }
.menu kbd { font: inherit; font-size: 13px; }
.menu button:disabled { color: #777; }
.menu hr { height: 1px; margin: 3px 1px 3px 28px; border: 0; background: #d0d0d0; }
.check { position: absolute; left: 0; top: 0; width: 22px; height: 22px; display: grid; place-items: center; background: #90c8f6; }
.cursor { position: absolute; left: 176px; top: 19px; }
```
FILE: script.js
```js
const swatchRows = [
  '000 000 000 000 030 060 090 0c0 0f0 300',
  '330 360 390 3c0 3f0 600 630 660 690 6c0',
  '6f0 000 333 000 003 033 063 093 0c3 0f3',
  '303 333 363 393 3c3 3f3 603 633 663 693',
  '6c3 6f3 000 666 000 006 036 066 096 0c6',
  '0f6 306 336 366 396 3c6 3f6 606 636 666',
  '696 6c6 6f6 000 999 000 009 039 069 099',
  '0c9 0f9 309 339 369 399 3c9 3f9 609 639',
  '669 699 6c9 6f9 000 ccc 000 00c 03c 06c',
  '09c 0cc 0fc 30c 33c 36c 39c 3cc 3fc 60c',
  '63c 66c 69c 6cc 6fc 000 fff 000 00f 03f',
  '06f 09f 0cf 0ff 30f 33f 36f 39f 3cf 3ff',
  '60f 63f 66f 69f 6cf 6ff 000 f00 000 900',
  '930 960 990 9c0 9f0 c00 c30 c60 c90 cc0',
  'cf0 f00 f30 f60 f90 fc0 ff0 000 0f0 000'
];
document.getElementById('swatches').innerHTML = swatchRows.join(' ').split(' ')
  .map(c => `<i style="background:#${c}"></i>`).join('');

const marks = [1];
for (let n = 5; n <= 60; n += 5) marks.push(n);
document.getElementById('ruler').innerHTML = marks.map(n => `<span>${n}</span>`).join('');

const tools = [
  ['t-select', '选择工具'], ['t-sub', '部分选取工具'], ['t-free', '任意变形工具', 1], ['t-3d', '3D 旋转工具', 1], ['t-lasso', '套索工具', 1], null,
  ['t-pen', '钢笔工具', 1], ['t-text', '文本工具'], ['t-line', '线条工具'], ['t-rect', '矩形工具', 1], ['t-oval', '椭圆工具', 1], ['t-poly', '多角星形工具'], ['pencil', '铅笔工具', 0, 1], ['t-brush', '刷子工具'], null,
  ['bucket', '颜料桶工具'], ['t-ink', '墨水瓶工具'], ['t-drop', '滴管工具'], ['t-eraser', '橡皮擦工具'], ['t-width', '宽度工具'], null,
  ['t-hand', '手形工具'], ['t-zoom', '缩放工具'], null, ['pencil', '笔触颜色']
];
document.getElementById('tools').innerHTML = tools.map(t => t
  ? `<button class="${t[3] ? 'sel' : ''}" aria-label="${t[1]}"><svg width="20" height="20"><use href="#${t[0]}"/></svg>${t[2] ? '<svg class="flag" width="4" height="4"><use href="#corner"/></svg>' : ''}</button>`
  : '<hr>').join('');
```
